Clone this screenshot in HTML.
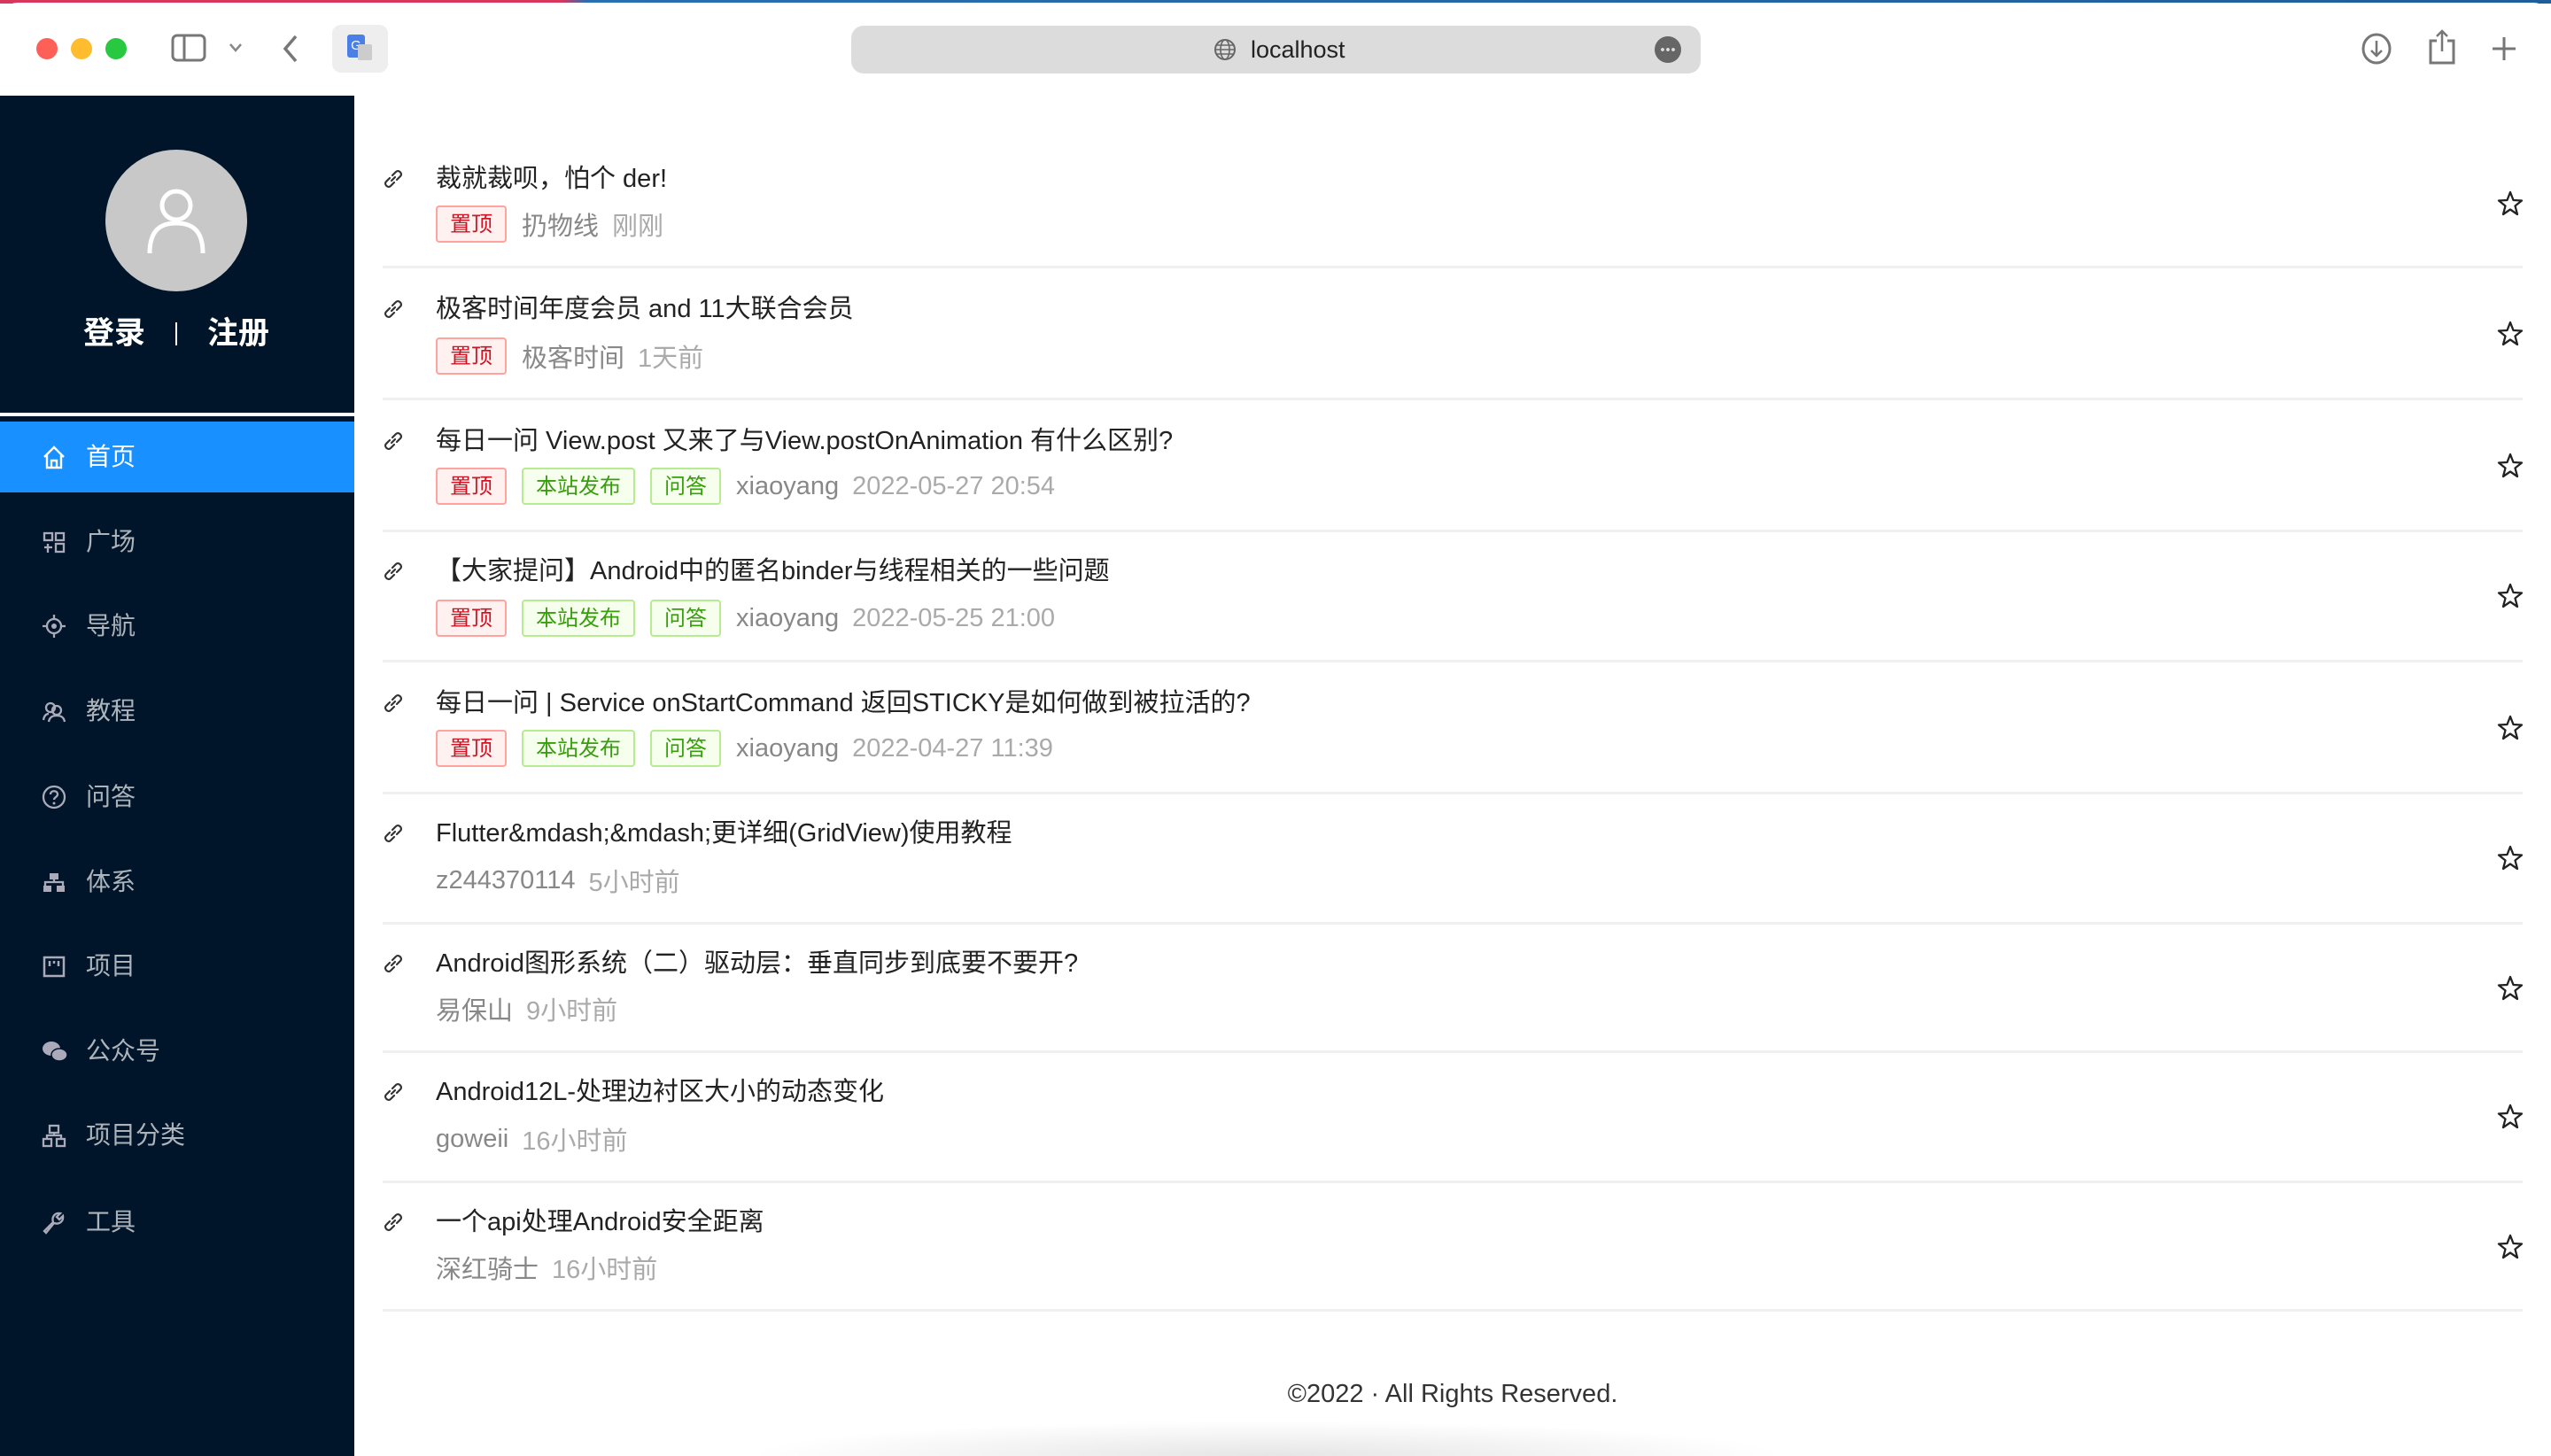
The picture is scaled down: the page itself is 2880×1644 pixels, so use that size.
<!DOCTYPE html>
<html style="overflow:hidden;height:1644px"><head><meta charset="utf-8"><style>
*{margin:0;padding:0;box-sizing:border-box}
body{width:2880px;height:1644px;overflow:hidden;background:#fff;position:relative;font-family:"Liberation Sans","Noto Sans CJK SC",sans-serif}
.a{position:absolute}
.top{left:0;top:0;width:2880px;height:4px;background:linear-gradient(90deg,#d8365c 0%,#d8365c 22%,#2a6fb0 23%,#1d5f9a 100%)}
.bar{left:0;top:3px;width:2880px;height:105px;background:#fff;border-radius:20px 20px 0 0}
.tl{width:24px;height:24px;border-radius:50%;top:43px}
.url{left:961px;top:29px;width:959px;height:54px;background:#dcdcdc;border-radius:14px}
.side{left:0;top:108px;width:400px;height:1536px;background:#001529}
.nav{left:0;width:400px;height:80px;color:rgba(255,255,255,.68);font-size:28px;line-height:80px}
.nav span{position:absolute;left:97px}
.nav svg{position:absolute;left:47px;top:26px}
.title{left:492px;font-size:29px;color:#222;line-height:34px;white-space:nowrap}
.row{left:492px;height:42px;display:flex;align-items:center;gap:17px;white-space:nowrap}
.tag{height:42px;line-height:40px;padding:0 14px;font-size:24px;border:2px solid;border-radius:4px}
.r{background:#fff1f0;border-color:#ffa39e;color:#cf1322}
.g{background:#f6ffed;border-color:#b7eb8f;color:#389e0d}
.au{font-size:29px;color:#888}
.tm{font-size:29px;color:#aaa;margin-left:-2px}
.sep{left:432px;width:2416px;height:3px;background:#f0f0f0}
.link{left:430px}
.star{left:2818px}
</style></head><body>
<div class="a top"></div>
<div class="a bar"></div>
<div class="a tl" style="left:41px;background:#fe5f57"></div>
<div class="a tl" style="left:80px;background:#febc2e"></div>
<div class="a tl" style="left:119px;background:#28c840"></div>
<svg class="a" style="left:193px;top:38px" width="40" height="32"><rect x="2" y="2" width="36" height="28" rx="5" fill="none" stroke="#777" stroke-width="3"/><line x1="15" y1="2" x2="15" y2="30" stroke="#777" stroke-width="3"/></svg>
<svg class="a" style="left:258px;top:48px" width="16" height="12"><path d="M2 2 L8 9 L14 2" fill="none" stroke="#888" stroke-width="2.5"/></svg>
<svg class="a" style="left:318px;top:38px" width="20" height="34"><path d="M16 3 L4 17 L16 31" fill="none" stroke="#777" stroke-width="3.5"/></svg>
<div class="a" style="left:375px;top:28px;width:63px;height:54px;background:#eee;border-radius:10px"></div>
<div class="a" style="left:392px;top:39px;width:20px;height:26px;background:#4a7fe8;border-radius:3px;color:#fff;font-size:15px;text-align:center;line-height:26px">G</div>
<div class="a" style="left:404px;top:50px;width:16px;height:18px;background:#ccc;border-radius:2px"></div>
<div class="a url"></div>
<svg class="a" style="left:1370px;top:43px" width="26" height="26"><circle cx="13" cy="13" r="11" fill="none" stroke="#666" stroke-width="2"/><ellipse cx="13" cy="13" rx="5" ry="11" fill="none" stroke="#666" stroke-width="1.6"/><line x1="2" y1="13" x2="24" y2="13" stroke="#666" stroke-width="1.6"/><line x1="4" y1="8" x2="22" y2="8" stroke="#666" stroke-width="1.4"/><line x1="4" y1="18" x2="22" y2="18" stroke="#666" stroke-width="1.4"/></svg>
<div class="a" style="left:1412px;top:38px;font-size:27px;color:#222;line-height:36px">localhost</div>
<div class="a" style="left:1868px;top:41px;width:30px;height:30px;border-radius:50%;background:#666"></div>
<div class="a" style="left:1874px;top:54px;width:18px;height:4px;background:radial-gradient(circle,#ddd 1.8px,transparent 2px) 0 0/6px 4px"></div>
<svg class="a" style="left:2665px;top:36px" width="36" height="38"><ellipse cx="18" cy="19" rx="15" ry="16" fill="none" stroke="#777" stroke-width="3"/><path d="M18 10 V27 M12 21 L18 27 L24 21" fill="none" stroke="#777" stroke-width="2.5"/></svg>
<svg class="a" style="left:2740px;top:32px" width="34" height="42"><path d="M11 14 H4 V39 H30 V14 H23" fill="none" stroke="#777" stroke-width="3"/><path d="M17 3 V26 M11 9 L17 3 L23 9" fill="none" stroke="#777" stroke-width="2.5"/></svg>
<svg class="a" style="left:2810px;top:38px" width="34" height="34"><path d="M17 4 V30 M4 17 H30" stroke="#777" stroke-width="3"/></svg>

<div class="a side"></div>
<div class="a" style="left:119px;top:169px;width:160px;height:160px;border-radius:50%;background:#c8c8c8"></div>
<svg class="a" style="left:163px;top:210px" width="72" height="80"><circle cx="36" cy="22" r="16" fill="none" stroke="#fff" stroke-width="5"/><path d="M6 76 C6 50 18 42 36 42 C54 42 66 50 66 76" fill="none" stroke="#fff" stroke-width="5"/></svg>
<div class="a" style="left:94px;top:354px;font-size:35px;color:#fff;line-height:46px;font-weight:bold">登录</div>
<div class="a" style="left:198px;top:364px;width:2px;height:26px;background:#fff"></div>
<div class="a" style="left:234px;top:354px;font-size:35px;color:#fff;line-height:46px;font-weight:bold">注册</div>
<div class="a" style="left:0;top:466px;width:400px;height:4px;background:#fff"></div>
<div class="a" style="left:0;top:476px;width:400px;height:80px;background:#1890ff"></div>

<div class="a nav" style="top:476px;color:#fff"><svg width="28" height="28"><path d="M3 14 L14 3 L25 14 M6 11 V26 H22 V11 M11 26 V18 H17 V26" fill="none" stroke="#fff" stroke-width="2.4"/></svg><span>首页</span></div>
<div class="a nav" style="top:572px"><svg width="28" height="28"><rect x="3" y="4" width="9" height="8" fill="none" stroke="#aab" stroke-width="2.3"/><rect x="16" y="4" width="9" height="8" fill="none" stroke="#aab" stroke-width="2.3"/><path d="M3 20 H12 M7 16 V26" stroke="#aab" stroke-width="2.3"/><rect x="16" y="16" width="9" height="9" fill="none" stroke="#aab" stroke-width="2.3"/></svg><span>广场</span></div>
<div class="a nav" style="top:667px"><svg width="28" height="28"><circle cx="14" cy="14" r="8" fill="none" stroke="#aab" stroke-width="2.3"/><circle cx="14" cy="14" r="3" fill="#aab"/><path d="M1 14 H6 M22 14 H27 M14 1 V6 M14 22 V27" stroke="#aab" stroke-width="2.3"/></svg><span>导航</span></div>
<div class="a nav" style="top:763px"><svg width="28" height="28"><circle cx="10" cy="10" r="5" fill="none" stroke="#aab" stroke-width="2.3"/><circle cx="17" cy="13" r="5" fill="none" stroke="#aab" stroke-width="2.3"/><path d="M2 24 C3 18 6 17 8 17 M8 26 C9 20 13 19 17 19 C21 19 25 20 26 26" fill="none" stroke="#aab" stroke-width="2.3"/></svg><span>教程</span></div>
<div class="a nav" style="top:860px"><svg width="28" height="28"><circle cx="14" cy="14" r="12" fill="none" stroke="#aab" stroke-width="2.3"/><path d="M10 11 C10 6 18 6 18 11 C18 14 14 14 14 17" fill="none" stroke="#aab" stroke-width="2.3"/><circle cx="14" cy="21" r="1.5" fill="#aab"/></svg><span>问答</span></div>
<div class="a nav" style="top:956px"><svg width="28" height="28"><rect x="9" y="4" width="10" height="7" fill="#aab"/><path d="M4 19 V14 H24 V19 M14 11 V14" fill="none" stroke="#aab" stroke-width="2.3"/><rect x="2" y="18" width="9" height="7" fill="#aab"/><rect x="17" y="18" width="9" height="7" fill="#aab"/></svg><span>体系</span></div>
<div class="a nav" style="top:1051px"><svg width="28" height="28"><rect x="3" y="4" width="22" height="21" fill="none" stroke="#aab" stroke-width="2.5"/><path d="M9 8 V14 M14 8 V11 M19 8 V14" stroke="#aab" stroke-width="2.5"/></svg><span>项目</span></div>
<div class="a nav" style="top:1147px"><svg width="30" height="28"><ellipse cx="11" cy="11" rx="10" ry="8" fill="#aab"/><ellipse cx="20" cy="18" rx="9" ry="7" fill="#aab" stroke="#001529" stroke-width="1.5"/></svg><span>公众号</span></div>
<div class="a nav" style="top:1242px"><svg width="28" height="28"><rect x="9" y="3" width="10" height="8" fill="none" stroke="#aab" stroke-width="2.3"/><path d="M6 19 V14 H22 V19 M14 11 V14" fill="none" stroke="#aab" stroke-width="2.3"/><rect x="2" y="18" width="9" height="8" fill="none" stroke="#aab" stroke-width="2.3"/><rect x="17" y="18" width="9" height="8" fill="none" stroke="#aab" stroke-width="2.3"/></svg><span>项目分类</span></div>
<div class="a nav" style="top:1340px"><svg width="28" height="28"><path d="M3 24 L13 14 C11 8 15 3 21 4 L17 8 L20 11 L24 7 C25 13 20 17 14 15 L5 26 Z" fill="none" stroke="#aab" stroke-width="2.3"/></svg><span>工具</span></div>

<div id="list"></div>
<div class="a" style="left:780px;top:1600px;width:1300px;height:44px;background:radial-gradient(ellipse 50% 100% at 50% 100%,rgba(0,0,0,.10),rgba(0,0,0,0) 90%)"></div>
<div class="a" style="left:400px;top:1556px;width:2480px;text-align:center;font-size:29px;color:#333;line-height:36px">©2022 · All Rights Reserved.</div>
<script>
var items=[
["裁就裁呗，怕个 der!",["r"],"扔物线","刚刚"],
["极客时间年度会员 and 11大联合会员",["r"],"极客时间","1天前"],
["每日一问 View.post 又来了与View.postOnAnimation 有什么区别?",["r","g1","g2"],"xiaoyang","2022-05-27 20:54"],
["【大家提问】Android中的匿名binder与线程相关的一些问题",["r","g1","g2"],"xiaoyang","2022-05-25 21:00"],
["每日一问 | Service onStartCommand 返回STICKY是如何做到被拉活的?",["r","g1","g2"],"xiaoyang","2022-04-27 11:39"],
["Flutter&amp;mdash;&amp;mdash;更详细(GridView)使用教程",[],"z244370114","5小时前"],
["Android图形系统（二）驱动层：垂直同步到底要不要开?",[],"易保山","9小时前"],
["Android12L-处理边衬区大小的动态变化",[],"goweii","16小时前"],
["一个api处理Android安全距离",[],"深红骑士","16小时前"]];
var ty=[202,349,498,645,794,941,1088,1233,1380],ry=[253,402,549,698,845,994,1139,1286,1431],sy=[300,449,598,745,894,1041,1186,1333,1478];
var h="";
items.forEach(function(it,i){
h+='<svg class="a link" style="top:'+(ty[i]-14)+'px" width="28" height="28"><path d="M12 16 L16 12 M10 13 L6 17 C3 20 8 25 11 22 L15 18 M18 15 L22 11 C25 8 20 3 17 6 L13 10" fill="none" stroke="#333" stroke-width="2.2" stroke-linecap="round"/></svg>';
h+='<div class="a title" style="top:'+(ty[i]-17)+'px">'+it[0]+'</div>';
h+='<div class="a row" style="top:'+(ry[i]-21)+'px">';
it[1].forEach(function(t){h+=t=="r"?'<div class="tag r">置顶</div>':t=="g1"?'<div class="tag g">本站发布</div>':'<div class="tag g">问答</div>';});
h+='<span class="au">'+it[2]+'</span><span class="tm">'+it[3]+'</span></div>';
h+='<svg class="a star" style="top:'+(ty[i]+12)+'px" width="32" height="32"><path d="M16 3 L19.5 12 L29 12.5 L21.5 18.5 L24 28 L16 22.5 L8 28 L10.5 18.5 L3 12.5 L12.5 12 Z" fill="none" stroke="#222" stroke-width="2.3" stroke-linejoin="round"/></svg>';
h+='<div class="a sep" style="top:'+sy[i]+'px"></div>';
});
document.getElementById("list").innerHTML=h;
</script>
</body></html>
